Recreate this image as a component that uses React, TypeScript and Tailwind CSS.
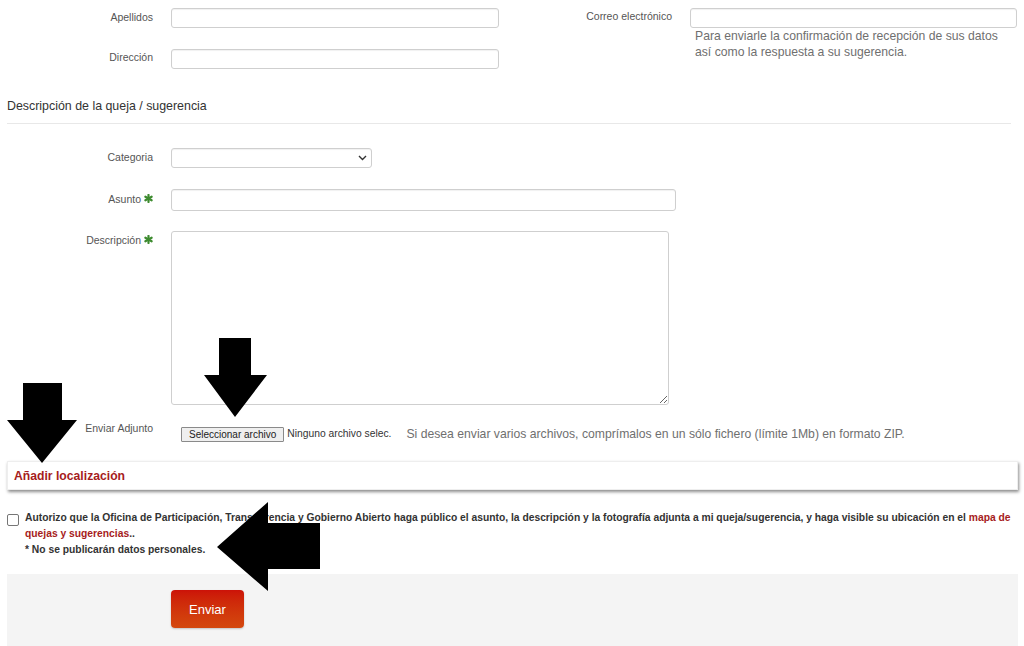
import React from "react";

const Star = () => (
  <svg width="9" height="9" viewBox="0 0 10 10" className="inline-block ml-[3px] -mt-[3px]">
    <g stroke="#3d8b2f" strokeWidth="2.4" strokeLinecap="round">
      <line x1="5" y1="1" x2="5" y2="9" />
      <line x1="1.5" y1="3" x2="8.5" y2="7" />
      <line x1="1.5" y1="7" x2="8.5" y2="3" />
    </g>
  </svg>
);

const inputCls =
  "h-[20px] border border-[#cfcfcf] rounded-[3px] bg-white shadow-[inset_0_1px_1px_rgba(0,0,0,0.06)]";

function Field({
  label,
  star,
  children,
  labelPt = "pt-[2px]",
}: {
  label: string;
  star?: boolean;
  children: React.ReactNode;
  labelPt?: string;
}) {
  return (
    <div className="flex items-start">
      <div className={`w-[146px] text-right text-[10.5px] leading-[14px] text-[#555] ${labelPt}`}>
        {label}
        {star && <Star />}
      </div>
      <div className="ml-[18px]">{children}</div>
    </div>
  );
}

export default function App() {
  return (
    <div className="relative w-[1024px] h-[646px] overflow-hidden bg-white font-['Liberation_Sans',Arial,sans-serif]">
      <div className="px-[7px] pt-[8px] w-[1018px]">
        {/* Top personal fields */}
        <div className="flex">
          <div className="w-[492px] flex flex-col gap-[21px]">
            <Field label="Apellidos" labelPt="pt-[2px]">
              <div className={`${inputCls} w-[328px]`} />
            </Field>
            <Field label="Dirección" labelPt="pt-[1px]">
              <div className={`${inputCls} w-[328px]`} />
            </Field>
          </div>
          <div className="ml-[27px] w-[492px]">
            <Field label="Correo electrónico" labelPt="pt-[1px]">
              <div className={`${inputCls} w-[327px]`} />
              <div className="pl-[5px] text-[12.2px] leading-[16px] text-[#6f6f6f]">
                Para enviarle la confirmación de recepción de sus datos
                <br />
                así como la respuesta a su sugerencia.
              </div>
            </Field>
          </div>
        </div>

        {/* Section heading */}
        <div className="mt-[29px] text-[12.4px] leading-[16px] text-[#333]">
          Descripción de la queja / sugerencia
        </div>
        <div className="mt-[9px] h-px bg-[#e8e8e8]" />

        {/* Description fields */}
        <div className="mt-[24px] flex flex-col">
          <Field label="Categoria" labelPt="pt-[2px]">
            <div className={`${inputCls} w-[201px] flex items-center justify-end pr-[4px]`}>
              <svg width="9" height="6" viewBox="0 0 9 6">
                <path d="M1 1 L4.5 4.5 L8 1" fill="none" stroke="#333" strokeWidth="1.4" />
              </svg>
            </div>
          </Field>
          <div className="mt-[21px]">
            <Field label="Asunto" star labelPt="pt-[3px]">
              <div className={`${inputCls} h-[22px] w-[505px]`} />
            </Field>
          </div>
          <div className="mt-[20px]">
            <Field label="Descripción" star labelPt="pt-[2px]">
              <textarea className="block w-[498px] h-[174px] border border-[#cfcfcf] rounded-[3px] bg-white outline-none resize-y" />
            </Field>
          </div>
          <div className="mt-[14px] flex items-start">
            <div className="w-[146px] text-right text-[10.5px] leading-[14px] text-[#555] pt-[2px]">
              Enviar Adjunto
            </div>
            <div className="ml-[28px] mt-[6px] flex items-center">
              <div className="h-[15px] px-[7px] flex items-center border border-[#8a8a8a] bg-[#efefef] rounded-[1px] text-[10px] text-[#222] whitespace-nowrap">
                Seleccionar archivo
              </div>
              <span className="ml-[3px] text-[10.3px] text-[#333] whitespace-nowrap">
                Ninguno archivo selec.
              </span>
              <span className="ml-[15px] text-[12.2px] text-[#6f6f6f] whitespace-nowrap">
                Si desea enviar varios archivos, comprímalos en un sólo fichero (límite 1Mb) en formato ZIP.
              </span>
            </div>
          </div>
        </div>

        {/* Location panel */}
        <div className="mt-[18px] h-[29px] w-[1011px] bg-white border border-[#eee] shadow-[1px_2px_3px_rgba(0,0,0,0.45)] flex items-center px-[6px]">
          <span className="text-[12.2px] font-bold text-[#a61c1c]">Añadir localización</span>
        </div>

        {/* Consent */}
        <div className="mt-[22px] flex items-start">
          <div className="mt-[2px] w-[12px] h-[12px] shrink-0 border border-[#767676] rounded-[2px] bg-white" />
          <div className="ml-[6px] text-[10.3px] leading-[16px] font-bold text-[#333] -mt-[2px]">
            Autorizo que la Oficina de Participación, Transparencia y Gobierno Abierto haga público el asunto, la descripción y la fotografía adjunta a mi queja/sugerencia, y haga visible su ubicación en el{" "}
            <span className="text-[#a61c1c]">mapa de quejas y sugerencias</span>..
            <br />* No se publicarán datos personales.
          </div>
        </div>

        {/* Footer */}
        <div className="mt-[16px] h-[80px] w-[1011px] bg-[#f4f4f4] pt-[16px] pl-[164px]">
          <button className="w-[73px] h-[38px] rounded-[4px] bg-gradient-to-b from-[#cc1208] to-[#d4480e] text-white text-[13px] shadow-[0_1px_2px_rgba(0,0,0,0.2)]">
            Enviar
          </button>
        </div>
      </div>

      {/* Arrows overlay */}
      <svg className="absolute left-[7px] top-[383px]" width="70" height="80" viewBox="0 0 70 80">
        <polygon points="16,0 55,0 55,37 70,37 35,80 0,37 16,37" fill="#000" />
      </svg>
      <svg className="absolute left-[204px] top-[338px]" width="63" height="79" viewBox="0 0 63 79">
        <polygon points="15,0 47,0 47,37 63,37 31,79 0,37 15,37" fill="#000" />
      </svg>
      <svg className="absolute left-[217px] top-[502px]" width="103" height="89" viewBox="0 0 103 89">
        <polygon points="0,45 51,0 51,21 103,21 103,67 51,67 51,89" fill="#000" />
      </svg>
    </div>
  );
}
